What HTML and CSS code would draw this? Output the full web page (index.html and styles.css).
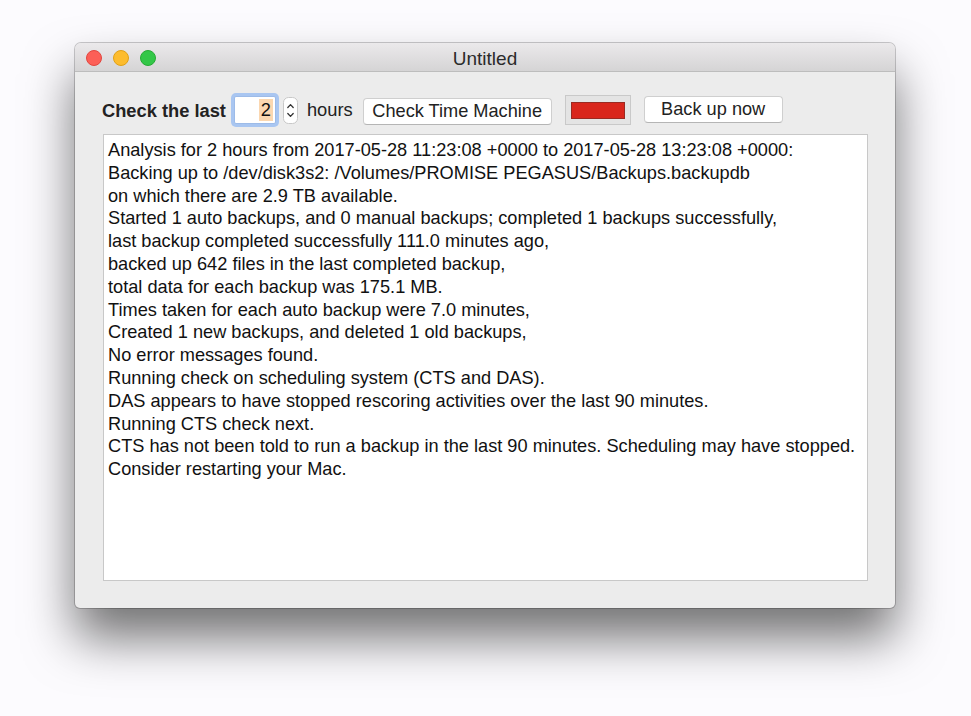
FILE: index.html
```html
<!DOCTYPE html>
<html>
<head>
<meta charset="utf-8">
<link rel="stylesheet" href="styles.css">
</head>
<body>
<div class="window">
  <div class="titlebar">
    <div class="lights">
      <span class="light red"></span>
      <span class="light yellow"></span>
      <span class="light green"></span>
    </div>
    <div class="title">Untitled</div>
  </div>
  <div class="content">
    <div class="toolbar">
      <span class="label">Check the last</span>
      <span class="numfield"><span class="sel">2</span></span>
      <span class="stepper">
        <svg width="15" height="27" viewBox="0 0 15 27"><rect x="0.5" y="0.5" width="14" height="26" rx="5" fill="#fff" stroke="#c8c8c8"/><path d="M4.8 10.5 L7.5 7.6 L10.2 10.5" fill="none" stroke="#333" stroke-width="1.3" stroke-linecap="round" stroke-linejoin="round"/><path d="M4.8 16.5 L7.5 19.4 L10.2 16.5" fill="none" stroke="#333" stroke-width="1.3" stroke-linecap="round" stroke-linejoin="round"/></svg>
      </span>
      <span class="hours">hours</span>
      <button class="btn btn-check">Check Time Machine</button>
      <span class="well"><span class="swatch"></span></span>
      <button class="btn btn-backup">Back up now</button>
    </div>
    <div class="textview">
      <div>Analysis for 2 hours from 2017-05-28 11:23:08 +0000 to 2017-05-28 13:23:08 +0000:</div>
      <div>Backing up to /dev/disk3s2: /Volumes/PROMISE PEGASUS/Backups.backupdb</div>
      <div>on which there are 2.9 TB available.</div>
      <div>Started 1 auto backups, and 0 manual backups; completed 1 backups successfully,</div>
      <div>last backup completed successfully 111.0 minutes ago,</div>
      <div>backed up 642 files in the last completed backup,</div>
      <div>total data for each backup was 175.1 MB.</div>
      <div>Times taken for each auto backup were 7.0 minutes,</div>
      <div>Created 1 new backups, and deleted 1 old backups,</div>
      <div>No error messages found.</div>
      <div>Running check on scheduling system (CTS and DAS).</div>
      <div>DAS appears to have stopped rescoring activities over the last 90 minutes.</div>
      <div>Running CTS check next.</div>
      <div>CTS has not been told to run a backup in the last 90 minutes. Scheduling may have stopped.</div>
      <div>Consider restarting your Mac.</div>
    </div>
  </div>
</div>
</body>
</html>
```
FILE: styles.css
```css
html, body {
  margin: 0;
  padding: 0;
}
body {
  width: 971px;
  height: 716px;
  background: #fcfbfe;
  font-family: "Liberation Sans", Arial, sans-serif;
  overflow: hidden;
}
.window {
  margin: 43px 0 0 75px;
  width: 820px;
  height: 565px;
  background: #ececec;
  border-radius: 6px 6px 5px 5px;
  box-shadow: 0 0 0 1px rgba(0,0,0,0.2), 0 30px 50px rgba(0,0,0,0.55);
  display: flex;
  flex-direction: column;
  overflow: hidden;
}
.titlebar {
  height: 28px;
  flex: none;
  background: linear-gradient(#ebe9eb, #d5d4d5);
  border-bottom: 1px solid #bdbdbd;
  display: flex;
  align-items: center;
  position: relative;
}
.lights {
  display: flex;
  gap: 11px;
  padding-left: 11px;
  margin-top: 2px;
}
.light {
  width: 16px;
  height: 16px;
  border-radius: 50%;
  display: block;
  box-sizing: border-box;
}
.red { background: #fc5f57; border: 1px solid #e2463f; }
.yellow { background: #fdbc2e; border: 1px solid #e1a116; }
.green { background: #33c748; border: 1px solid #27aa35; }
.title {
  position: absolute;
  left: 0;
  right: 0;
  top: 5px;
  text-align: center;
  font-size: 19px;
  color: #2b2b2b;
}
.content {
  flex: 1;
  padding: 20px 27px 27px 28px;
  display: flex;
  flex-direction: column;
}
.toolbar {
  display: flex;
  align-items: center;
  height: 36px;
  margin-bottom: 6px;
}
.label {
  font-weight: bold;
  font-size: 18.3px;
  color: #222;
  margin-left: -1px;
  margin-top: 2px;
}
.numfield {
  margin-left: 8px;
  width: 42px;
  height: 28px;
  box-sizing: border-box;
  background: #fff;
  border: 1px solid #9dbbe8;
  box-shadow: 0 0 0 3px #a9c6f1;
  border-radius: 2px;
  display: flex;
  justify-content: flex-end;
  align-items: center;
  padding-right: 2px;
  font-size: 18.3px;
  color: #111;
}
.sel {
  background: #fbd7b0;
  padding: 0 2px;
  line-height: 22px;
}
.stepper {
  margin-left: 7px;
  display: flex;
}
.hours {
  font-size: 18.3px;
  color: #222;
  margin-left: 9px;
}
.btn {
  font-family: "Liberation Sans", Arial, sans-serif;
  font-size: 18.2px;
  color: #222;
  background: #fff;
  border: 1px solid #cfcfcf;
  border-bottom-color: #b5b5b5;
  border-radius: 4px;
  height: 27px;
  padding: 0;
  line-height: 24px;
}
.btn-check {
  margin-left: 10px;
  width: 189px;
  margin-top: 2px;
}
.well {
  margin-left: 13px;
  width: 66px;
  height: 30px;
  box-sizing: border-box;
  border: 1px solid #c9c9c9;
  background: #e4e4e4;
  display: flex;
  align-items: center;
  justify-content: center;
}
.swatch {
  width: 54px;
  height: 17px;
  background: #d9261c;
  border: 1px solid #9a2a22;
  box-sizing: border-box;
}
.btn-backup {
  margin-left: 13px;
  width: 139px;
  margin-top: -2px;
}
.textview {
  flex: 1;
  background: #fff;
  border: 1px solid #c8c8c8;
  padding: 4px 4px;
  font-size: 18.2px;
  line-height: 22.8px;
  color: #111;
}
```
